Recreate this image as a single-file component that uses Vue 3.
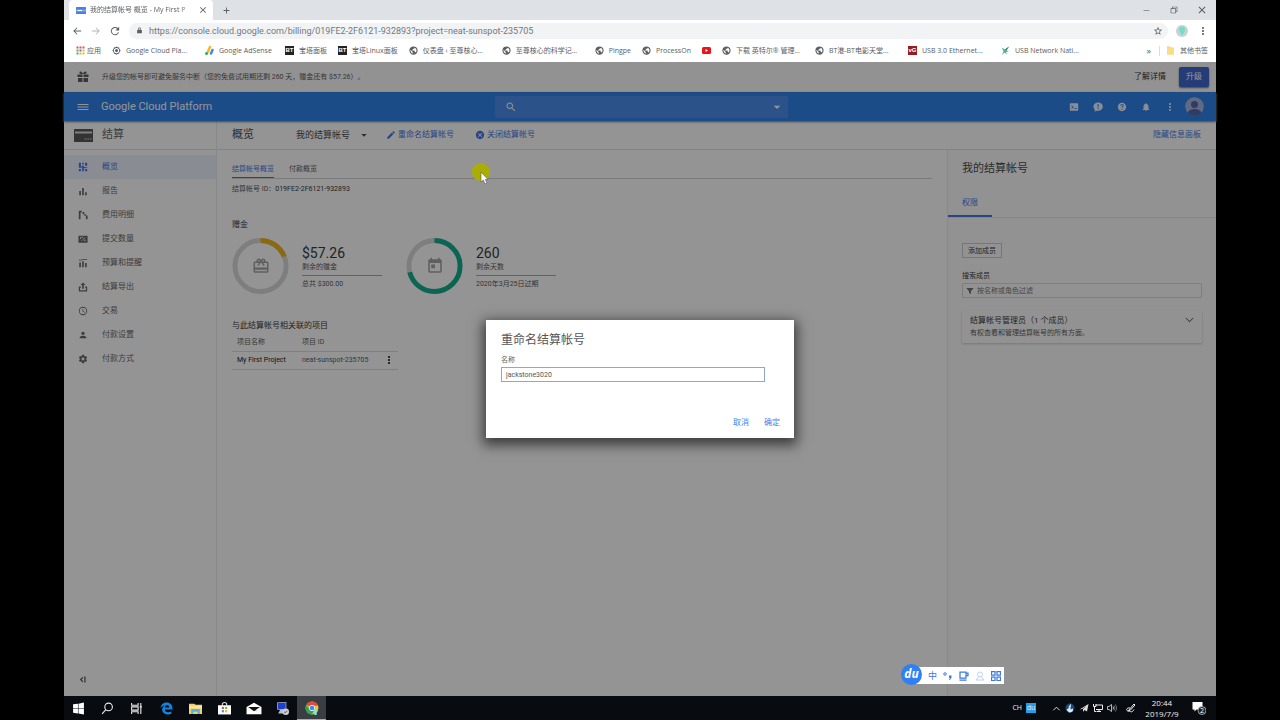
<script setup>
import { h, ref } from 'vue'

const paths = {
  menu: 'M1 18h22v-2H1v2zm0-5h22v-2H1v2zm0-7v2h22V6H1z',
  search: 'M15.5 14h-.79l-.28-.27C15.41 12.59 16 11.11 16 9.5 16 5.91 13.09 3 9.5 3S3 5.91 3 9.5 5.91 16 9.5 16c1.61 0 3.09-.59 4.23-1.57l.27.28v.79l5 4.99L20.49 19l-4.99-5zm-6 0C7.01 14 5 11.99 5 9.5S7.01 5 9.5 5 14 7.01 14 9.5 11.99 14 9.5 14z',
  edit: 'M3 17.25V21h3.75L17.81 9.94l-3.75-3.75L3 17.25zM20.71 7.04a1 1 0 0 0 0-1.41l-2.34-2.34a1 1 0 0 0-1.41 0l-1.83 1.83 3.75 3.75 1.83-1.83z',
  cancel: 'M12 2C6.47 2 2 6.47 2 12s4.47 10 10 10 10-4.47 10-10S17.53 2 12 2zm5 13.59L15.59 17 12 13.41 8.41 17 7 15.59 10.59 12 7 8.41 8.41 7 12 10.59 15.59 7 17 8.41 13.41 12 17 15.59z',
  help: 'M12 2C6.48 2 2 6.48 2 12s4.48 10 10 10 10-4.48 10-10S17.52 2 12 2zm1 17h-2v-2h2v2zm2.07-7.75l-.9.92C13.45 12.9 13 13.5 13 15h-2v-.5c0-1.1.45-2.1 1.17-2.83l1.24-1.26c.37-.36.59-.86.59-1.41 0-1.1-.9-2-2-2s-2 .9-2 2H8c0-2.21 1.79-4 4-4s4 1.79 4 4c0 .88-.36 1.68-.93 2.25z',
  bell: 'M12 22c1.1 0 2-.9 2-2h-4c0 1.1.89 2 2 2zm6-6v-5c0-3.07-1.64-5.64-4.5-6.32V4c0-.83-.67-1.5-1.5-1.5s-1.5.67-1.5 1.5v.68C7.63 5.36 6 7.92 6 11v5l-2 2v1h16v-1l-2-2z',
  feedback: 'M12 1a11 10 0 0 0-11 10 10 10 0 0 0 3 7v5l6-2.300A11 10 0 1 0 12 1zM11 5h2.500v7H11zM11 14h2.500v2.500H11z',
  shell: 'M4 3h16a2 2 0 0 1 2 2v14a2 2 0 0 1-2 2H4a2 2 0 0 1-2-2V5a2 2 0 0 1 2-2zM6 8v2.500l3 2-3 2V17l6-4.500zM13 15v2h6v-2z',
  more: 'M12 8c1.100 0 2-.9 2-2s-.9-2-2-2-2 .9-2 2 .9 2 2 2zm0 2c-1.100 0-2 .9-2 2s.9 2 2 2 2-.9 2-2-.9-2-2-2zm0 6c-1.100 0-2 .9-2 2s.9 2 2 2 2-.9 2-2-.9-2-2-2z',
  down: 'M4 9h16l-8 8z',
  overview: 'M2 2h5v12H2zM2 17h5v5H2zM10 2h4v4h-4zM10 9h4v13h-4zM17 2h5v7h-5zM17 12h5v2h-5zM17 17h5v5h-5zM7 10h3v3H7zM14 12h3v3h-3z',
  report: 'M3 12h4v10H3zM10 5h4v17h-4zM17 15h4v7h-4z',
  breakdown: 'M2 2h7v4H6v16H2zM11 5h4v5h-4zM15 10h4v4h-4zM19 13h4v9h-4z',
  commit: 'M1 4h22v17H1zM5 8v4h2V9h2V7zM17 8l-9 8 1 1 9-8zM15 14v3h3v-3zM10 6v3h2V6z',
  budget: 'M2 4h7v2H2zM9 3h13v2H9zM3 11h4v11H3zM10 8h4v14h-4zM17 12h4v10h-4z',
  export: 'M12 1l6 6h-4v9h-4V7H6zM2 11h5v3H5v6h14v-6h-2v-3h5v12H2z',
  clock: 'M12 2a10 10 0 1 0 0 20 10 10 0 0 0 0-20zm0 18a8 8 0 1 1 0-16 8 8 0 0 1 0 16zM12.500 7H11v6l5.250 3.150.75-1.230-4.500-2.670z',
  person: 'M12 12c2.210 0 4-1.790 4-4s-1.790-4-4-4-4 1.790-4 4 1.790 4 4 4zm0 2c-2.670 0-8 1.340-8 4v2h16v-2c0-2.660-5.330-4-8-4z',
  gear: 'M19.43 12.98c.04-.32.07-.64.07-.98s-.03-.66-.07-.98l2.110-1.650c.19-.15.24-.42.12-.64l-2-3.460c-.12-.22-.39-.3-.61-.22l-2.490 1c-.52-.4-1.080-.73-1.690-.98l-.38-2.650C14.460 2.180 14.250 2 14 2h-4c-.25 0-.46.18-.49.42l-.38 2.650c-.61.25-1.170.59-1.690.98l-2.490-1c-.23-.09-.49 0-.61.22l-2 3.460c-.13.22-.07.49.12.64l2.110 1.650c-.04.32-.07.65-.07.98s.03.66.07.98l-2.110 1.650c-.19.15-.24.42-.12.64l2 3.460c.12.22.39.3.61.22l2.490-1c.52.4 1.080.73 1.690.98l.38 2.650c.03.24.24.42.49.42h4c.25 0 .46-.18.49-.42l.38-2.650c.61-.25 1.170-.59 1.690-.98l2.490 1c.23.09.49 0 .61-.22l2-3.460c.12-.22.07-.49-.12-.64l-2.110-1.650zM12 15.500c-1.930 0-3.500-1.570-3.500-3.500s1.570-3.500 3.500-3.500 3.500 1.570 3.500 3.500-1.570 3.500-3.500 3.500z',
  giftcard: 'M20 6h-2.180c.11-.31.18-.65.18-1 0-1.660-1.340-3-3-3-1.050 0-1.960.54-2.500 1.350l-.5.67-.5-.68C10.960 2.540 10.050 2 9 2 7.340 2 6 3.340 6 5c0 .35.07.69.18 1H4c-1.110 0-1.990.89-1.990 2L2 19c0 1.110.89 2 2 2h16c1.110 0 2-.89 2-2V8c0-1.110-.89-2-2-2zm-5-2c.55 0 1 .45 1 1s-.45 1-1 1-1-.45-1-1 .45-1 1-1zM9 4c.55 0 1 .45 1 1s-.45 1-1 1-1-.45-1-1 .45-1 1-1zm11 15H4v-2h16v2zm0-5H4V8h5.080L7 10.830 8.620 12 11 8.760l1-1.360 1 1.360L15.380 12 17 10.830 14.920 8H20v6z',
  calendar: 'M19 3h-1V1h-2v2H8V1H6v2H5c-1.110 0-1.990.9-1.990 2L3 19c0 1.100.89 2 2 2h14c1.100 0 2-.9 2-2V5c0-1.100-.9-2-2-2zm0 16H5V8h14v11zM7 10h5v5H7z',
  gift: 'M1 7h10v5H1zM13 7h10v5H13zM2 14h9v8H2zM13 14h9v8h-9zM12 6C10 0 4 0 5 4c.5 2 4 2 7 2zM12 6c2-6 8-6 7-2-.5 2-4 2-7 2z',
  globe: 'M12 1a11 11 0 1 0 0 22 11 11 0 0 0 0-22zm-1 19c-4-.5-7-4-7-8l.2-1.800L9 15v1c0 1.100.9 2 2 2v2zm6.900-2.600c-.26-.8-1-1.400-1.900-1.400h-1v-3c0-.55-.45-1-1-1H8v-2h2c.55 0 1-.45 1-1V7h2c1.100 0 2-.9 2-2v-.4c3 1.200 5 4 5 7.400 0 2-.8 4-2.100 5.400z',
  hub: 'M12 1l3 2 4 1 1 4 3 4-3 4-1 4-4 1-3 2-3-2-4-1-1-4-3-4 3-4 1-4 4-1zM12 5a7 7 0 1 0 0 14 7 7 0 0 0 0-14zM12 8a4 4 0 1 1 0 8 4 4 0 0 1 0-8z',
  lock: 'M18 9h-1V7A5 5 0 0 0 7 7v2H6a2 2 0 0 0-2 2v10h16V11a2 2 0 0 0-2-2zM9 9V7a3 3 0 0 1 6 0v2z',
  star: 'M22 9.240l-7.190-.62L12 2 9.190 8.630 2 9.240l5.460 4.730L5.820 21 12 17.270 18.180 21l-1.630-7.030L22 9.240zM12 15.400l-3.760 2.270 1-4.280-3.320-2.880 4.380-.38L12 6.100l1.710 4.040 4.380.38-3.320 2.880 1 4.280z',
  back: 'M22 11H7l6-6-1.500-1.500L3 12l8.500 8.500L13 19l-6-6h15z',
  forward: 'M2 11h15l-6-6 1.500-1.500L21 12l-8.500 8.500L11 19l6-6H2z',
  reload: 'M19 5a10 10 0 1 0 2.600 10h-2.400A7.700 7.700 0 1 1 17.300 6.700L13 11h9V2z',
  close: 'M19 6.400L17.600 5 12 10.600 6.400 5 5 6.400l5.600 5.600L5 17.600 6.400 19l5.600-5.600 5.600 5.600 1.400-1.400-5.600-5.600z',
  plus: 'M22 13.500h-8.500V22h-3v-8.500H2v-3h8.500V2h3v8.500H22z',
  minimize: 'M2 11h20v2H2z',
  restore: 'M2 7h4V2h16v15h-4v5H2zM8 4v3h10v8h2V4zM4 9v11h12V9z',
  filter: 'M1 3h22l-8 10v8l-6-3v-5z',
  chevron: 'M3 7l9 9 9-9 1.500 1.500L12 19 1.500 8.500z',
  collapse: 'M12 5l2 2-5 5 5 5-2 2-7-7zM17 4h3v16h-3z'
}

const Icon = (props) =>
  h('svg', { viewBox: '0 0 24 24', 'aria-hidden': 'true' }, [
    h('path', { d: paths[props.name], fill: 'currentColor', 'fill-rule': 'evenodd' })
  ])
Icon.props = ['name']

const bookmarks = [
  { kind: 'apps', label: '应用' },
  { kind: 'hub', label: 'Google Cloud Pla...', capped: true },
  { kind: 'adsense', label: 'Google AdSense' },
  { kind: 'bt', label: '宝塔面板' },
  { kind: 'bt', label: '宝塔Linux面板' },
  { kind: 'globe', label: '仪表盘 ‹ 至尊核心...', capped: true },
  { kind: 'globe', label: '至尊核心的科学记...', capped: true },
  { kind: 'globe', label: 'Pingpe' },
  { kind: 'globe', label: 'ProcessOn' },
  { kind: 'youtube', label: '' },
  { kind: 'globe', label: '下载 英特尔® 管理...', capped: true },
  { kind: 'globe', label: 'BT港-BT电影天堂...', capped: true },
  { kind: 'vg', label: 'USB 3.0 Ethernet...', capped: true },
  { kind: 'runner', label: 'USB Network Nati...', capped: true }
]
const dots = [
  '#e0554a', '#e0554a', '#e0554a',
  '#5ba56a', '#4a7fdc', '#e9b53c',
  '#5ba56a', '#e9b53c', '#e9b53c'
]
const sections = [
  { icon: 'overview', label: '概览', active: true },
  { icon: 'report', label: '报告' },
  { icon: 'breakdown', label: '费用明细' },
  { icon: 'commit', label: '提交数量' },
  { icon: 'budget', label: '预算和提醒' },
  { icon: 'export', label: '结算导出' },
  { icon: 'clock', label: '交易' },
  { icon: 'person', label: '付款设置' },
  { icon: 'gear', label: '付款方式' }
]
const credits = [
  { icon: 'giftcard', tone: 'amber', share: 19, value: '$57.26', caption: '剩余的赠金', note: '总共 $300.00' },
  { icon: 'calendar', tone: 'teal', share: 71, value: '260', caption: '剩余天数', note: '2020年3月25日过期' }
]
const tools = [
  ['shell', 'Cloud Shell'], ['feedback', '反馈'], ['help', '帮助'], ['bell', '通知'], ['more', '更多']
]
const url = ref('https://console.cloud.google.com/billing/019FE2-2F6121-932893?project=neat-sunspot-235705')
const accountName = ref('jackstone3020')
</script>

<template>
  <div class="desktop">
    <header class="browser">
      <div class="tabstrip">
        <div class="browser-tab">
          <svg class="favicon" viewBox="0 0 20 14" aria-hidden="true"><rect width="20" height="14" rx="1" fill="#4a80e0" /><path d="M0 5h20v4H0z" fill="#7ea6ee" /><path d="M3 7h9" stroke="#fff" stroke-width="2" /></svg>
          <span class="tab-title">我的结算帐号 概览 - My First P</span>
          <button class="plain" aria-label="关闭标签页"><Icon name="close" class="i10" /></button>
        </div>
        <button class="plain new-tab" aria-label="新标签页"><Icon name="plus" class="i7" /></button>
        <div class="window-controls">
          <button class="plain" aria-label="最小化"><Icon name="minimize" class="i7" /></button>
          <button class="plain" aria-label="还原"><Icon name="restore" class="i8" /></button>
          <button class="plain" aria-label="关闭"><Icon name="close" class="i12" /></button>
        </div>
      </div>
      <div class="toolbar">
        <button class="plain" aria-label="后退"><Icon name="back" class="i10" /></button>
        <button class="plain faded" aria-label="前进"><Icon name="forward" class="i10" /></button>
        <button class="plain" aria-label="重新加载"><Icon name="reload" class="i10" /></button>
        <div class="omnibox">
          <Icon name="lock" class="i7" />
          <input v-model="url" class="url" aria-label="地址" spellcheck="false">
          <button class="plain" aria-label="收藏"><Icon name="star" class="i10" /></button>
        </div>
        <button class="plain profile" aria-label="个人资料"><svg viewBox="0 0 24 24"><circle cx="12" cy="12" r="12" fill="#c9d2d2" /><path d="M12 3c-5 0-7 5-5 9 1 3 3 3 3 8h4c0-4 4-5 4-10 0-4-2-7-6-7z" fill="#74dccb" /></svg></button>
        <button class="plain" aria-label="菜单"><Icon name="more" class="i12" /></button>
      </div>
      <nav class="bookmarks" aria-label="书签">
        <a v-for="(b, i) in bookmarks" :key="i" href="#" :class="['bookmark', b.kind + '-mark']" :aria-label="b.label || 'YouTube'">
          <span v-if="b.kind === 'bt'" class="bt">BT</span>
          <span v-else-if="b.kind === 'vg'" class="vg">vG</span>
          <Icon v-else-if="b.kind === 'globe' || b.kind === 'hub'" :name="b.kind" class="i9" />
          <svg v-else class="i9" viewBox="0 0 18 18" aria-hidden="true">
            <template v-if="b.kind === 'apps'">
              <rect v-for="(c, n) in dots" :key="n" :x="1 + (n % 3) * 6" :y="1 + Math.floor(n / 3) * 6" width="4" height="4" :fill="c" />
            </template>
            <template v-else-if="b.kind === 'adsense'">
              <path d="M10 2L5 13" stroke="#f4b822" stroke-width="5" stroke-linecap="round" />
              <circle cx="3" cy="15" r="3" fill="#34a853" />
              <path d="M15 8l-3 7" stroke="#4285f4" stroke-width="5" stroke-linecap="round" />
            </template>
            <template v-else-if="b.kind === 'youtube'">
              <rect y="2" width="18" height="14" rx="3" fill="#e8131c" /><path d="M7 6l5 3-5 3z" fill="#fff" />
            </template>
            <template v-else>
              <path d="M1 3l7 4 8-6-5 8 5 2-6 1 2 5-5-4-5 5 3-8z" fill="#4ab58c" /><path d="M8 7l8-6-5 8z" fill="#4a6f95" />
            </template>
          </svg>
          <span v-if="b.label" :class="{ capped: b.capped }">{{ b.label }}</span>
        </a>
        <div class="bookmark-end">
          <button class="plain overflow" aria-label="更多书签">»</button>
          <a href="#" class="bookmark other">
            <svg class="i9" viewBox="0 0 18 18" aria-hidden="true"><path d="M2 1h6l2 2h6v14H2z" fill="#f5d679" /><path d="M2 5h14v12H2z" fill="#fade87" /></svg>
            <span>其他书签</span>
          </a>
        </div>
      </nav>
    </header>

    <div class="page">
      <div class="notice">
        <Icon name="gift" class="i12" />
        <p>升级您的帐号即可避免服务中断（您的免费试用期还剩 260 天，赠金还有 $57.26）。</p>
        <a href="#" class="learn">了解详情</a>
        <button class="upgrade">升级</button>
      </div>

      <header class="appbar">
        <div class="brand">
          <button class="plain" aria-label="导航菜单"><Icon name="menu" class="i12" /></button>
          <span>Google Cloud Platform</span>
        </div>
        <div class="searchbox">
          <Icon name="search" class="i12" />
          <input aria-label="搜索">
          <Icon name="down" class="i10" />
        </div>
        <div class="tools">
          <button v-for="[name, label] in tools" :key="name" class="plain tool" :aria-label="label"><Icon :name="name" :class="name === 'more' ? 'i12' : 'i10'" /></button>
          <button class="plain" aria-label="帐号">
            <svg class="avatar" viewBox="0 0 38 38"><clipPath id="face"><circle cx="19" cy="19" r="19" /></clipPath><g clip-path="url(#face)"><circle cx="19" cy="19" r="19" fill="#a5b7e2" /><circle cx="19" cy="15" r="7" fill="#5268ad" /><path d="M5 38v-6c2-6 8-8 14-8s12 2 14 8v6z" fill="#5268ad" /></g></svg>
          </button>
        </div>
      </header>

      <div class="body">
        <aside class="sidebar">
          <h1>
            <svg class="card-icon" viewBox="0 0 38 26" aria-hidden="true"><rect width="38" height="26" rx="1" fill="#5b5b5b" /><path d="M2 5h34v4H2z" fill="#ddd" /><path d="M21 20h4M27 20h3M32 20h3" stroke="#ddd" stroke-width="2" /></svg>
            结算
          </h1>
          <nav aria-label="结算">
            <a v-for="s in sections" :key="s.label" href="#" :class="{ active: s.active }"><Icon :name="s.icon" class="i10" />{{ s.label }}</a>
          </nav>
          <button class="plain fold" aria-label="收起"><Icon name="collapse" class="i9" /></button>
        </aside>

        <div class="workspace">
          <div class="actionbar">
            <h2>概览</h2>
            <button class="plain account">我的结算帐号<Icon name="down" class="i8" /></button>
            <button class="plain action rename"><Icon name="edit" class="i10" />重命名结算帐号</button>
            <button class="plain action"><Icon name="cancel" class="i10" />关闭结算帐号</button>
            <button class="plain action hide">隐藏信息面板</button>
          </div>
          <div class="columns">
            <main class="content">
              <div class="tabs">
                <button class="plain on">结算帐号概览</button>
                <button class="plain">付款概览</button>
              </div>
              <p class="ident">结算帐号 ID：<b>019FE2-2F6121-932893</b></p>
              <h3>赠金</h3>
              <div class="credits">
                <section v-for="c in credits" :key="c.value" class="credit">
                  <div class="ring">
                    <svg viewBox="0 0 58 58" aria-hidden="true">
                      <circle cx="29" cy="29" r="26" class="track" />
                      <circle cx="29" cy="29" r="26" pathLength="100" :class="['arc', c.tone]" :stroke-dasharray="c.share + ' 100'" transform="rotate(-90 29 29)" />
                    </svg>
                    <Icon :name="c.icon" class="ring-icon" />
                  </div>
                  <div class="figures">
                    <strong>{{ c.value }}</strong>
                    <span class="caption">{{ c.caption }}</span>
                    <span class="note">{{ c.note }}</span>
                  </div>
                </section>
              </div>
              <h3>与此结算帐号相关联的项目</h3>
              <table>
                <thead><tr><th>项目名称</th><th>项目 ID</th><th></th></tr></thead>
                <tbody>
                  <tr><td><a href="#">My First Project</a></td><td>neat-sunspot-235705</td><td><button class="plain" aria-label="操作"><Icon name="more" class="i12" /></button></td></tr>
                </tbody>
              </table>
            </main>

            <aside class="info">
              <h2>我的结算帐号</h2>
              <div class="info-tabs"><button class="plain">权限</button></div>
              <div class="info-body">
                <button class="add">添加成员</button>
                <label for="member-filter">搜索成员</label>
                <div class="filter"><Icon name="filter" class="i8" /><input id="member-filter" placeholder="按名称或角色过滤"></div>
                <section class="role">
                  <div>
                    <h3>结算帐号管理员（1 个成员）</h3>
                    <p>有权查看和管理结算帐号的所有方面。</p>
                  </div>
                  <button class="plain" aria-label="展开"><Icon name="chevron" class="i9" /></button>
                </section>
              </div>
            </aside>
          </div>
        </div>
      </div>

      <div class="scrim">
        <form class="dialog" role="dialog" aria-labelledby="dialog-title" @submit.prevent>
          <h2 id="dialog-title">重命名结算帐号</h2>
          <label for="account-name">名称</label>
          <input id="account-name" v-model="accountName" spellcheck="false">
          <div class="dialog-actions">
            <button type="button" class="plain">取消</button>
            <button type="submit" class="plain">确定</button>
          </div>
        </form>
      </div>

      <svg class="pointer" viewBox="0 0 20 22" aria-hidden="true"><circle cx="10" cy="10" r="9" fill="#aaae04" /><path d="M10 10v10l2.300-2 1.700 4 2-1-1.700-3.500H17z" fill="#fff" stroke="#555" stroke-width=".6" /></svg>

      <div class="ime">
        <span class="ime-logo">du</span>
        <button class="plain">中</button>
        <button class="plain" aria-label="标点"><svg class="i10" viewBox="0 0 20 20"><circle cx="4" cy="6" r="2.500" fill="none" stroke="currentColor" stroke-width="2" /><path d="M12 9h5v4l-3 5h-2l2-4h-2z" fill="currentColor" /></svg></button>
        <button class="plain" aria-label="皮肤"><svg class="i10" viewBox="0 0 20 20" fill="none" stroke="currentColor" stroke-width="2.500"><path d="M2 2h12v12H2zM14 4h4v5h-4M1 18h14" /></svg></button>
        <button class="plain dim" aria-label="用户"><svg class="i10" viewBox="0 0 20 20" fill="none" stroke="currentColor" stroke-width="2"><circle cx="10" cy="7" r="5" /><path d="M7 12l-5 6h16l-5-6" /></svg></button>
        <button class="plain" aria-label="工具箱"><svg class="i10" viewBox="0 0 20 20" fill="none" stroke="currentColor" stroke-width="2.500"><path d="M1 1h7v7H1zM12 1h7v7h-7zM1 12h7v7H1zM12 12h7v7h-7z" /></svg></button>
      </div>
    </div>

    <footer class="taskbar">
      <div class="apps">
        <button class="plain" aria-label="开始"><svg viewBox="0 0 24 24"><path d="M2 4l9-1v8H2zM12 3l10-2v10H12zM2 12h9v9l-9-1zM12 12h10v11l-10-2z" fill="#fff" /></svg></button>
        <button class="plain" aria-label="搜索"><svg viewBox="0 0 24 24" fill="none" stroke="#eee" stroke-width="2"><circle cx="14" cy="9" r="7" /><path d="M9 14l-7 8" /></svg></button>
        <button class="plain" aria-label="任务视图"><svg viewBox="0 0 24 24" fill="none" stroke="#eee" stroke-width="2"><path d="M3 2v4h12V2M3 22v-4h12v4M3 9h12v6H3zM20 2v20M18 9h4" /></svg></button>
        <button class="plain" aria-label="Edge"><svg viewBox="0 0 24 24"><path d="M1 11C2 4 7 1 12 1c7 0 11 5 11 10v3H9c0 4 3 5 6 5 2 0 4-.5 6-1.500v4c-2 1-4 1.500-7 1.500-6 0-10-4-10-9 0-3 2-6 5-7-3 0-6 1-8 4zm8-1h8c0-3-2-4-4-4s-4 1-4 4z" fill="#1583db" /></svg></button>
        <button class="plain" aria-label="文件"><svg viewBox="0 0 24 24"><path d="M0 3h10l2 2h12v17H0z" fill="#f3cf69" /><path d="M0 7h24v5H0z" fill="#fae6a0" /><path d="M4 22v-9h16v9h-4v-4H8v4z" fill="#56b3dd" /></svg></button>
        <button class="plain" aria-label="商店"><svg viewBox="0 0 24 24"><path d="M8 7V3q4-4 8 0v4" fill="none" stroke="#ddd" stroke-width="2" /><path d="M0 6h24v17H0z" fill="#fff" /><path d="M7 9h4v4H7z" fill="#e5502c" /><path d="M13 9h4v4h-4z" fill="#7bb52b" /><path d="M7 15h4v4H7z" fill="#2b9fe5" /><path d="M13 15h4v4h-4z" fill="#f5b622" /></svg></button>
        <button class="plain" aria-label="邮件"><svg class="wide" viewBox="0 0 30 24"><path d="M1 9l14-8 14 8v14H1z" fill="#fff" /><path d="M4 9h22l-11 8zM15 14l6 3-7-2z" fill="#111" /></svg></button>
        <button class="plain" aria-label="远程"><svg viewBox="0 0 24 24"><path d="M2 1l17-1v15L2 14z" fill="#cfd6e6" /><path d="M3 2l15-1v13L3 13z" fill="#1d3fd0" /><path d="M8 14h5v4h4v3H4z" fill="#b8c0cc" /><circle cx="18" cy="18" r="6" fill="#ced2d6" /><path d="M15 18l2 2 4-4" fill="none" stroke="#777" stroke-width="2" /></svg></button>
        <button class="plain running" aria-label="Chrome"><svg viewBox="0 0 24 24"><circle cx="12" cy="12" r="11" fill="#f5c32c" /><path d="M12 12L2.500 6.500A11 11 0 0 1 21.500 6.500L21 8H12z" fill="#e24b3b" /><path d="M2.500 6.500A11 11 0 0 0 12 23l4-8-8-1z" fill="#2fa355" /><circle cx="12" cy="12" r="5" fill="#fff" /><circle cx="12" cy="12" r="4" fill="#4285f4" /><path d="M18 13c-4 0-4 4-2 6v5h4v-4c3-2 2-7-2-7z" fill="#8be0d2" /></svg></button>
      </div>
      <div class="tray">
        <span class="lang">CH</span>
        <span class="du">du</span>
        <svg viewBox="0 0 20 20" fill="none" stroke="#eee" stroke-width="2" class="caret"><path d="M3 14l7-7 7 7" /></svg>
        <svg viewBox="0 0 20 20"><circle cx="10" cy="10" r="9" fill="#174a78" /><path d="M12 1L6 9h4l-7 4 5 6c6 0 9-3 8-8l-5 2z" fill="#d6ecfa" /></svg>
        <svg viewBox="0 0 20 20"><path d="M1 13L19 2l-3 15-5-3-3 4v-6l7-6-9 6z" fill="#ddd" /></svg>
        <svg viewBox="0 0 20 20" fill="none" stroke="#eee" stroke-width="2"><path d="M5 4h14v9H6M1 2v5h5V2M3 8v9h4M12 13v4M8 17h8" /></svg>
        <svg viewBox="0 0 20 20" fill="none" stroke="#eee" stroke-width="1.500"><path d="M1 7h3l5-4v14l-5-4H1zM12 7q2 3 0 6" /><path d="M14 5q4 5 0 10M17 3q5 7 0 14" stroke="#888" /></svg>
        <svg viewBox="0 0 20 20" fill="none" stroke="#eee" stroke-width="2" class="pen"><path d="M5 15L16 2l2 2L8 15zM8 10c-5-1-8 2-6 5s6 0 7 2 5 0 7-4" /></svg>
        <time class="clock"><span>20:44</span><span>2019/7/9</span></time>
        <svg class="messages" viewBox="0 0 28 28"><path d="M1 2h20v15H9l-4 4v-4H1z" fill="#fff" /><circle cx="20" cy="19" r="8" fill="#222" stroke="#ccc" stroke-width="1.500" /><text x="20" y="24" text-anchor="middle" fill="#fff" font-size="14">2</text></svg>
      </div>
    </footer>
  </div>
</template>

<style>
html, body { margin: 0; background: #000; }
</style>

<style scoped>
.desktop {
  --blue: #4778e6;
  height: 100vh;
  box-sizing: border-box;
  padding: 0 5%;
  display: flex;
  flex-direction: column;
  overflow: hidden;
  background: #000;
  color: #606060;
  font: 7px/10px Roboto, "Noto Sans CJK SC", sans-serif;
  text-spacing-trim: space-all;
}
.desktop * { box-sizing: border-box; }
h1, h2, h3, p { margin: 0; font-weight: 400; }
a { color: inherit; text-decoration: none; }
svg { display: block; flex: none; }
button, input { font: inherit; color: inherit; }
input { border: 0; outline: 0; padding: 0; background: none; min-width: 0; }
.plain { border: 0; padding: 0; background: none; display: flex; align-items: center; justify-content: center; white-space: nowrap; }
.i7 { width: 7px; height: 7px; }
.i8 { width: 8px; height: 8px; }
.i9 { width: 9px; height: 9px; }
.i10 { width: 10px; height: 10px; }
.i12 { width: 12px; height: 12px; }

.browser { flex: none; background: #fff; color: #5a5d61; font-family: "Open Sans", "Noto Sans CJK SC", sans-serif; }
.tabstrip { height: 20px; display: flex; align-items: center; background: #dee1e6; padding-left: 5px; }
.browser-tab { width: 144px; height: 20px; display: flex; align-items: center; gap: 4px; padding: 0 5px 0 7px; background: #fff; border-radius: 4px 4px 0 0; }
.favicon { width: 10px; height: 7px; }
.tab-title { flex: 1; white-space: nowrap; mask-image: linear-gradient(to right, #000 85%, #0004); }
.new-tab { margin-left: 10px; }
.window-controls { margin-left: auto; height: 17px; display: flex; align-items: center; }
.window-controls button { width: 28px; }
.toolbar { height: 21px; display: flex; align-items: center; padding: 0 7px 0 8px; gap: 9px; }
.faded { opacity: .45; }
.omnibox { flex: 1; height: 16px; display: flex; align-items: center; gap: 6px; margin-right: -1px; padding: 0 5px 0 7px; border-radius: 8px; background: #f1f3f4; }
.url { flex: 1; font-family: Roboto, sans-serif; font-size: 9px; color: #74787c; }
.profile svg { width: 12px; height: 12px; }
.bookmarks { height: 21px; display: flex; align-items: center; gap: 11px; padding: 0 8px 2px 12px; }
.bookmark { display: flex; align-items: center; gap: 5px; white-space: nowrap; }
.apps-mark { gap: 2px; }
.adsense-mark { min-width: 69px; }
.capped { width: 68px; overflow: hidden; }
.bt, .vg { width: 9px; height: 9px; font: 700 6px/9px "Liberation Sans", sans-serif; text-align: center; color: #fff; background: #222; }
.vg { background: #961c20; }
.bookmark-end { margin-left: auto; display: flex; align-items: center; gap: 8px; }
.overflow { font-size: 9px; line-height: 10px; }
.other { border-left: 1px solid #ddd; padding-left: 6px; }

.page { position: relative; flex: 1; min-height: 0; display: flex; flex-direction: column; background: #fff; }
.notice { flex: none; height: 30px; display: flex; align-items: center; gap: 13px; padding: 0 7px 0 13px; background: #fbfbfb; }
.notice p { flex: 1; }
.learn { font-size: 8px; color: #333; }
.upgrade { width: 30px; height: 20px; padding: 0; border: 0; border-radius: 2px; background: #3f68cf; color: #fff; font-size: 8px; box-shadow: 0 1px 2px #777; }
.appbar { flex: none; height: 29px; display: grid; grid-template-columns: 1fr minmax(0, 293px) 1fr; align-items: center; padding: 0 12px 0 14px; background: #3183ea; color: #fff; box-shadow: 0 1px 2px #777; z-index: 1; }
.brand { display: flex; align-items: center; gap: 12px; margin-left: -1px; font-size: 11px; white-space: nowrap; }
.searchbox { height: 22px; display: flex; align-items: center; padding: 0 6px 0 10px; gap: 6px; border-radius: 2px; background: #4a90ee; }
.searchbox input { flex: 1; }
.tools { display: flex; justify-content: flex-end; align-items: center; color: #eef3fd; }
.tool { width: 24px; }
.avatar { width: 19px; height: 19px; margin-left: 3px; }

.body { flex: 1; min-height: 0; display: flex; }
.sidebar { flex: none; width: 153px; display: flex; flex-direction: column; border-right: 1px solid #eaeaea; font-size: 8px; color: #6a6a6a; }
.sidebar h1 { height: 29px; display: flex; align-items: center; gap: 9px; padding-left: 10px; border-bottom: 1px solid #e2e2e2; font-size: 11px; }
.card-icon { width: 19px; height: 13px; }
.sidebar nav { padding-top: 5px; }
.sidebar nav a { height: 24px; display: flex; align-items: center; gap: 14px; padding-left: 14px; }
.sidebar nav a.active { color: var(--blue); background: #edf2fb; }
.fold { margin: auto auto 12px 14px; color: #444; }
.workspace { flex: 1; min-width: 0; display: flex; flex-direction: column; }
.actionbar { flex: none; height: 29px; display: flex; align-items: center; padding: 0 15px; border-bottom: 1px solid #e2e2e2; }
.actionbar h2 { font-size: 11px; color: #4c4c4c; }
.account { margin-left: 42px; gap: 10px; font-size: 9px; color: #4c4c4c; }
.action { gap: 2px; margin-left: 21px; font-size: 8px; color: var(--blue); }
.rename { margin-left: 18px; }
.hide { margin-left: auto; }
.columns { flex: 1; min-height: 0; display: flex; }
.content { flex: 1; min-width: 0; padding: 9px 15px; }
.tabs { height: 20px; display: flex; gap: 15px; border-bottom: 1px solid #d5d5d5; }
.tabs .on { color: var(--blue); box-shadow: inset 0 -1px 0 var(--blue); }
.ident { margin-top: 5px; }
.ident b { font-weight: 400; color: #3c3c3c; }
.content h3 { margin-top: 26px; font-size: 8px; color: #3c3c3c; }
.credits { display: flex; gap: 24px; margin-top: 7px; }
.credit { display: flex; gap: 13px; width: 150px; }
.ring { width: 57px; height: 58px; display: grid; place-items: center; }
.ring > * { grid-area: 1 / 1; }
.ring > svg:first-child { width: 57px; height: 58px; fill: none; stroke-width: 5; }
.track { stroke: #dadada; }
.amber { stroke: #f0b61c; }
.teal { stroke: #12b090; }
.ring-icon { width: 18px; height: 18px; color: #a4a4a4; }
.figures { flex: 1; display: flex; flex-direction: column; padding-top: 8px; white-space: nowrap; }
.figures strong { font-size: 14px; line-height: 17px; font-weight: 400; color: #3c3c3c; }
.caption { height: 14px; border-bottom: 1px solid #aaa; }
.note { margin-top: 3px; }
.credits + h3 { margin-top: 26px; }
table { width: 166px; margin-top: 2px; border-collapse: collapse; text-align: left; }
th, td { height: 18px; padding: 0 0 0 5px; font-weight: 400; border-bottom: 1px solid #dcdcdc; white-space: nowrap; }
th:first-child { width: 65px; }
td a, td button { color: #222; }
td .plain { margin-left: -2px; }
.info { flex: none; width: 269px; border-left: 1px solid #ececec; background: #fcfcfc; }
.info h2 { padding: 12px 0 0 14px; font-size: 11px; line-height: 14px; color: #4c4c4c; }
.info-tabs { margin-top: 11px; height: 31px; display: flex; border-bottom: 1px solid #e8e8e8; }
.info-tabs button { width: 44px; padding-top: 3px; font-size: 8px; color: var(--blue); border-bottom: 2px solid var(--blue); }
.info-body { padding: 25px 14px 0 14px; }
.add { display: block; height: 15px; padding: 0 5px; border: 1px solid #ccc; background: #fcfcfc; color: #3c3c3c; }
.info-body label { display: block; margin: 13px 0 2px; color: #3c3c3c; }
.filter { height: 15px; display: flex; align-items: center; gap: 3px; padding: 0 3px; border: 1px solid #dadada; color: #777; }
.filter input { flex: 1; }
.filter input::placeholder { color: #777; }
.role { margin-top: 13px; min-height: 32px; display: flex; align-items: flex-start; justify-content: space-between; padding: 4px 8px; box-shadow: 0 1px 2px #ccc; }
.role h3 { font-size: 8px; line-height: 12px; color: #3c3c3c; }
.role p { line-height: 12px; }

.scrim { position: absolute; inset: 0; z-index: 2; display: grid; place-items: center; background: rgba(0, 0, 0, .42); }
.dialog { width: 308px; padding: 13px 13px 10px 15px; display: flex; flex-direction: column; background: #fff; box-shadow: 0 4px 12px 3px rgba(0, 0, 0, .6); }
.dialog h2 { font-size: 12px; line-height: 15px; color: #555; }
.dialog label { margin-top: 7px; }
.dialog input { width: 264px; height: 15px; margin-top: 2px; padding: 0 4px; border: 1px solid #8ba6dc; color: #555; }
.dialog-actions { display: flex; justify-content: flex-end; gap: 15px; padding-right: 1px; margin-top: 36px; font-size: 8px; color: #4a80ea; }
.pointer { position: absolute; z-index: 3; left: 407px; top: 100px; width: 20px; height: 22px; }
.ime { position: absolute; z-index: 3; right: 212px; bottom: 12px; height: 17px; display: flex; align-items: center; gap: 6px; padding-right: 3px; background: #fff; color: #3a7ae4; font-size: 9px; }
.ime-logo { width: 21px; height: 21px; margin: 0 0 2px -10px; border-radius: 50%; background: #2f80f6; color: #fff; font: italic 700 12px/20px "Open Sans", sans-serif; text-align: center; }
.dim { opacity: .35; }

.taskbar { flex: none; height: 24px; display: flex; justify-content: space-between; background: #080b10; color: #eee; font: 7px/10px "Open Sans", "Noto Sans CJK SC", sans-serif; }
.apps { display: flex; }
.apps button { width: 29px; height: 24px; }
.apps button:nth-child(4) { margin-left: 1px; }
.apps svg { width: 13px; height: 13px; }
.apps .wide { width: 16px; }
.apps .running { background: #3a3d41; border-bottom: 1px solid #76b9ed; }
.apps .running svg { width: 14px; height: 14px; }
.tray { display: flex; align-items: center; gap: 4px; padding-right: 10px; }
.tray > svg { width: 10px; height: 10px; }
.du { width: 10px; height: 10px; background: #1fa0e8; font-size: 7px; line-height: 9px; text-align: center; }
.tray > .caret { margin-left: 12px; width: 9px; height: 9px; }
.tray > .pen { margin-left: 5px; }
.clock { width: 40px; margin-left: 2px; display: flex; flex-direction: column; align-items: center; font-size: 8px; line-height: 11px; }
.tray > .messages { width: 14px; height: 14px; margin-left: 6px; }
</style>
